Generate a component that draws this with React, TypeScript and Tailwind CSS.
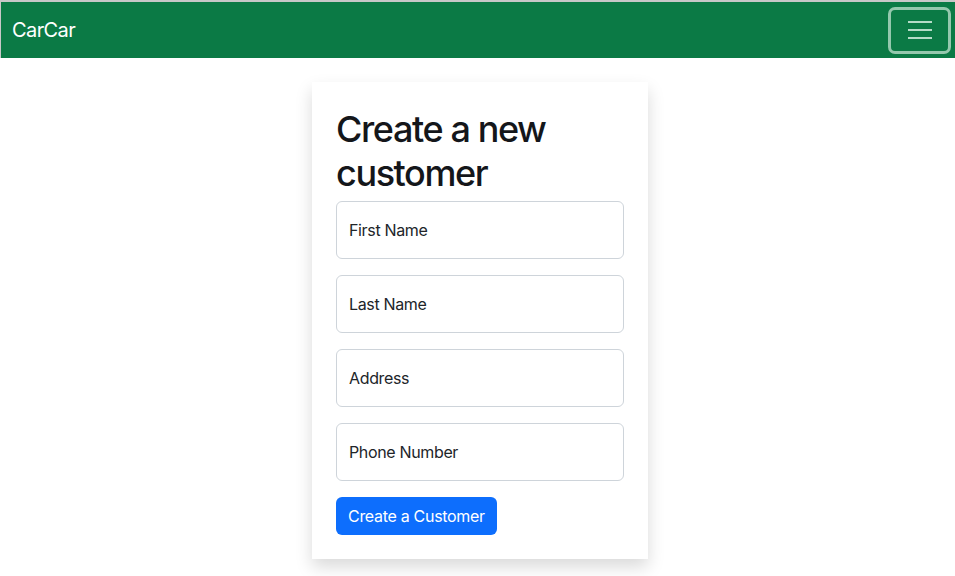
const fields = ['First Name', 'Last Name', 'Address', 'Phone Number']

export default function App() {
  return (
    <div className="min-h-[576px] bg-white" style={{ fontFamily: 'Inter, "Noto Sans", sans-serif' }}>
      <nav className="h-[58px] border-t-2 border-l border-[#c8c8c8] bg-[#0b7a45] flex items-center justify-between pl-[11px] pr-[4px]">
        <span className="text-white text-[20px] leading-none tracking-[-0.6px]">CarCar</span>
        <button
          aria-label="Toggle navigation"
          className="w-[63px] h-[47px] rounded-[7px] border-[3px] border-[#94c8ad] flex flex-col items-center justify-center gap-[6px]"
        >
          <span className="block w-[24px] h-[2px] bg-[#b5dbc7]" />
          <span className="block w-[24px] h-[2px] bg-[#b5dbc7]" />
          <span className="block w-[24px] h-[2px] bg-[#b5dbc7]" />
        </button>
      </nav>

      <div className="flex justify-center pl-[5px] pt-[24px]">
        <div className="w-[336px] bg-white p-[24px] shadow-[0_8px_16px_rgba(0,0,0,0.15)]">
          <h1 className="text-[36px] leading-[43.5px] pt-[2px] -mb-[2px] font-medium text-[#14161a] tracking-[-1.4px]">
            Create a new customer
          </h1>
          <form onSubmit={(e) => e.preventDefault()} className="mt-[8px]">
            {fields.map((f) => (
              <div key={f} className="mb-[16px]">
                <input
                  placeholder={f}
                  className="w-full h-[58px] rounded-[6px] border border-[#ced4da] px-[12px] text-[16px] tracking-[-0.35px] text-[#212529] placeholder:text-[#212529] outline-none"
                />
              </div>
            ))}
            <button className="h-[38px] px-[12px] rounded-[6px] bg-[#0d6efd] text-white text-[16px] tracking-[-0.3px]">
              Create a Customer
            </button>
          </form>
        </div>
      </div>
    </div>
  )
}
